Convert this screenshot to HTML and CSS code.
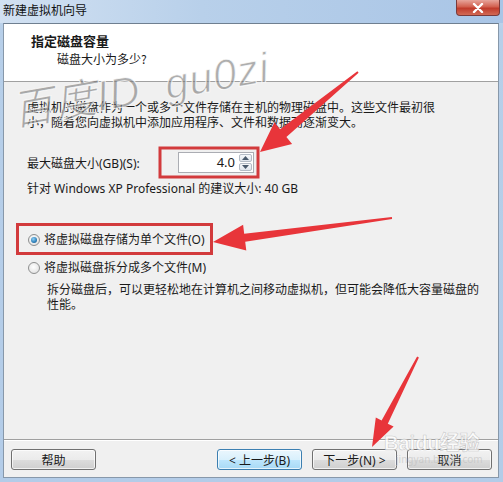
FILE: index.html
```html
<!DOCTYPE html>
<html lang="zh-CN">
<head>
<meta charset="utf-8">
<title>新建虚拟机向导</title>
<link rel="stylesheet" href="styles.css">
</head>
<body>
<div class="window">
  <div class="titlebar">
    <span class="title">新建虚拟机向导</span>
    <span class="close">
      <svg width="14" height="10" viewBox="0 0 14 10"><path d="M3 1 L11 9 M11 1 L3 9" stroke="#fff" stroke-width="2.4" stroke-linecap="round"/></svg>
    </span>
  </div>
  <div class="client">
    <div class="header">
      <div class="h-title">指定磁盘容量</div>
      <div class="h-sub">磁盘大小为多少?</div>
    </div>
    <div class="body">
      <p class="para">虚拟机的磁盘作为一个或多个文件存储在主机的物理磁盘中。这些文件最初很<br>小，随着您向虚拟机中添加应用程序、文件和数据而逐渐变大。</p>
      <div class="size-row">
        <span class="size-label">最大磁盘大小(GB)(S):</span>
        <div class="spinner">
          <span class="spin-value">4.0</span>
          <div class="spin-btns">
            <span class="spin-btn"><svg width="7" height="4" viewBox="0 0 7 4"><path d="M0 4 L3.5 0 L7 4Z" fill="#4a5a6c"/></svg></span>
            <span class="spin-btn"><svg width="7" height="4" viewBox="0 0 7 4"><path d="M0 0 L3.5 4 L7 0Z" fill="#4a5a6c"/></svg></span>
          </div>
        </div>
      </div>
      <p class="recommend">针对 Windows XP Professional 的建议大小: 40 GB</p>
      <label class="radio radio-first"><span class="dot checked"></span>将虚拟磁盘存储为单个文件(O)</label>
      <label class="radio radio-second"><span class="dot"></span>将虚拟磁盘拆分成多个文件(M)</label>
      <p class="desc">拆分磁盘后，可以更轻松地在计算机之间移动虚拟机，但可能会降低大容量磁盘的<br>性能。</p>
    </div>
    <div class="footer">
      <button class="btn">帮助</button>
      <div class="nav">
        <button class="btn focus">&lt; 上一步(B)</button>
        <button class="btn">下一步(N) &gt;</button>
        <button class="btn">取消</button>
      </div>
    </div>
  </div>

  <div class="watermark">百度ID&nbsp; gu0zi</div>
  <div class="baidu-mark"><span class="bm-big">Bai<span class="paw">du</span>经验</span><span class="bm-small">jingyan.baidu.com</span></div>

  <svg class="annot" width="503" height="482" viewBox="0 0 503 482">
    <rect x="160" y="148" width="98" height="29" fill="none" stroke="#d23a3c" stroke-width="3"/>
    <rect x="17.5" y="224.5" width="194" height="29" fill="none" stroke="#d23a3c" stroke-width="3"/>
    <polygon fill="#e8353a" points="358.6,72.8 286.4,136.9 292.1,143.9 260,152 274.4,122.2 280.1,129.2 357.4,71.2"/>
    <polygon fill="#e8353a" points="392.1,219 245.2,241.7 246.3,250.6 213,242 243.1,224.8 244.2,233.7 391.9,217"/>
    <polygon fill="#e8353a" points="418.9,357.5 387.8,423.7 393.6,426.6 372,447 375.8,417.5 381.6,420.5 417.1,356.5"/>
  </svg>
</div>
</body>
</html>
```
FILE: styles.css
```css
* { box-sizing: border-box; }
html, body { margin: 0; padding: 0; }
body {
  width: 503px;
  height: 482px;
  overflow: hidden;
  font-family: "Noto Sans", "Noto Sans CJK SC", sans-serif;
  font-size: 12px;
  color: #1a1a1a;
}
.window {
  position: relative;
  width: 503px;
  height: 482px;
  display: flex;
  flex-direction: column;
  background: linear-gradient(to bottom, #c9dcf0 0, #b7cfe9 30px, #b3cce8 100%);
}
.titlebar {
  height: 23px;
  display: flex;
  align-items: flex-start;
  justify-content: space-between;
  padding-left: 3px;
  background: linear-gradient(to right, #d2e1f2 0, #b8d0ea 40%, #a9c5e6 100%);
}
.title {
  font-family: "Noto Sans CJK SC", sans-serif;
  font-size: 12px;
  line-height: 19px;
  color: #111;
}
.close {
  width: 44px;
  height: 16px;
  margin-right: 3px;
  border: 1px solid #7a3a3a;
  border-top: none;
  border-radius: 0 0 4px 4px;
  background: linear-gradient(to bottom, #e7a59b 0, #d2604f 45%, #c03b2b 55%, #d26a55 100%);
  display: flex;
  align-items: center;
  justify-content: center;
}
.client {
  flex: 1;
  margin: 0 4px 4px 3px;
  display: flex;
  flex-direction: column;
  background: #f0f0f0;
  border-top: 1px solid #6f7f90;
  border-left: 1px solid #8798aa;
  border-right: 1px solid #8798aa;
  border-bottom: 1px solid #8798aa;
}
.header {
  height: 58px;
  background: #fff;
  border-bottom: 1px solid #a0a0a0;
  padding: 8px 0 0 27px;
}
.h-title {
  font-family: "Noto Sans CJK SC", sans-serif;
  font-weight: 700;
  font-size: 13px;
  line-height: 18px;
}
.h-sub {
  font-family: "Noto Sans CJK SC", sans-serif;
  line-height: 18px;
  padding-left: 26px;
}
.body {
  flex: 1;
  padding: 18px 0 0 23px;
}
p { margin: 0; }
.para { line-height: 15px; }
.size-row {
  margin-top: 22px;
  display: flex;
  align-items: center;
  height: 21px;
}
.size-label { width: 151px; }
.spinner {
  width: 76px;
  height: 21px;
  display: flex;
  border: 1px solid #abadb3;
  background: #fff;
}
.spin-value {
  flex: 1;
  text-align: right;
  padding-right: 4px;
  line-height: 19px;
  font-size: 13px;
}
.spin-btns {
  width: 14px;
  display: flex;
  flex-direction: column;
  gap: 1px;
  padding: 1px 1px 1px 0;
}
.spin-btn {
  flex: 1;
  display: flex;
  align-items: center;
  justify-content: center;
  border: 1px solid #b4bcc6;
  border-radius: 2px;
  background: linear-gradient(to bottom, #f6f8fa, #dfe5ec);
}
.recommend {
  margin-top: 8px;
  line-height: 15px;
}
.radio {
  display: flex;
  align-items: center;
  height: 16px;
  line-height: 16px;
  padding-left: 1px;
}
.radio-first { margin-top: 36px; }
.radio-second { margin-top: 12px; }
.dot {
  width: 12px;
  height: 12px;
  border-radius: 50%;
  border: 1px solid #8e8f8f;
  background: radial-gradient(circle at 45% 40%, #fff 0, #e6e6e6 70%, #d6d6d6 100%);
  margin-right: 4px;
  position: relative;
}
.dot.checked::after {
  content: "";
  position: absolute;
  left: 2px;
  top: 2px;
  width: 6px;
  height: 6px;
  border-radius: 50%;
  background: radial-gradient(circle at 40% 35%, #8fd0f6 0, #2d7fb8 60%, #164f7c 100%);
}
.desc {
  margin-top: 6px;
  padding-left: 20px;
  line-height: 15px;
}
.footer {
  height: 38px;
  border-top: 1px solid #a0a0a0;
  box-shadow: inset 0 1px 0 #fff;
  display: flex;
  justify-content: space-between;
  padding: 9px 6px 0 7px;
}
.nav {
  display: flex;
  gap: 10px;
}
.btn {
  width: 85px;
  height: 21px;
  padding: 0;
  font-family: "Noto Sans", "Noto Sans CJK SC", sans-serif;
  font-size: 12px;
  color: #1a1a1a;
  border: 1px solid #707070;
  border-radius: 3px;
  background: linear-gradient(to bottom, #f2f2f2 0, #ebebeb 50%, #dddddd 51%, #cfcfcf 100%);
  box-shadow: inset 0 0 0 1px rgba(255,255,255,0.7);
}
.btn.focus {
  border-color: #3c7fb1;
  background: linear-gradient(to bottom, #eaf6fd 0, #d9f0fc 50%, #bee6fd 51%, #a7d9f5 100%);
}
.watermark {
  position: absolute;
  left: 16px;
  top: 90px;
  font-family: "Liberation Sans", "Noto Sans CJK SC", sans-serif;
  font-style: italic;
  font-size: 42px;
  line-height: 44px;
  letter-spacing: 1px;
  color: rgba(120, 120, 120, 0.6);
  -webkit-text-stroke: 1px rgba(255,255,255,0.8);
  transform: rotate(-10deg);
  transform-origin: left bottom;
  white-space: nowrap;
  pointer-events: none;
}
.baidu-mark {
  position: absolute;
  left: 384px;
  top: 432px;
  display: flex;
  flex-direction: column;
  color: rgba(255, 255, 255, 0.75);
  pointer-events: none;
}
.bm-big {
  font-family: "Liberation Sans", "Noto Sans CJK SC", sans-serif;
  font-size: 20px;
  line-height: 22px;
  font-weight: 700;
  -webkit-text-stroke: 0.6px rgba(170,170,170,0.6);
}
.bm-small {
  font-size: 10px;
  line-height: 11px;
  padding-left: 12px;
  color: rgba(190,190,190,0.6);
}
.annot {
  position: absolute;
  left: 0;
  top: 0;
  pointer-events: none;
}
```
